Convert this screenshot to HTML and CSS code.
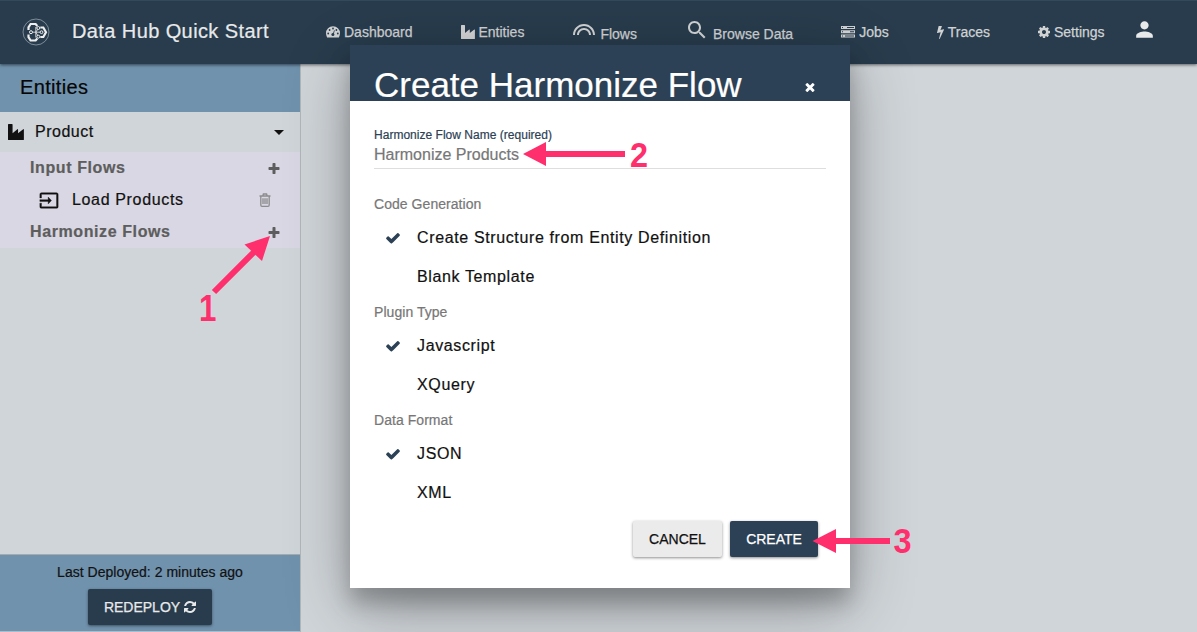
FILE: index.html
```html
<!DOCTYPE html>
<html lang="en">
<head>
<meta charset="utf-8">
<title>Data Hub Quick Start</title>
<link rel="stylesheet" href="styles.css">
</head>
<body>
<svg class="defs" width="0" height="0">
  <symbol id="check" viewBox="0 0 1792 1792"><path d="M1671 566q0 40-28 68l-724 724-136 136q-28 28-68 28t-68-28l-136-136-362-362q-28-28-28-68t28-68l136-136q28-28 68-28t68 28l294 295 656-657q28-28 68-28t68 28l136 136q28 28 28 68z"/></symbol>
  <symbol id="plus" viewBox="0 0 1792 1792"><path d="M1600 736v192q0 40-28 68t-68 28h-416v416q0 40-28 68t-68 28h-192q-40 0-68-28t-28-68v-416h-416q-40 0-68-28t-28-68v-192q0-40 28-68t68-28h416v-416q0-40 28-68t68-28h192q40 0 68 28t28 68v416h416q40 0 68 28t28 68z"/></symbol>
  <symbol id="industry" viewBox="0 0 14 14"><path d="M.4 0h3.200q.4 0 .4.4V8l4.200-3.400q.6-.4.6.3V8L13.300 4.600q.6-.4.6.3V13.500q0 .5-.5.5H.500Q0 14 0 13.500V.4Q0 0 .4 0z"/></symbol>
</svg>
<header class="toolbar">
  <svg class="logo" viewBox="0 0 28 28">
    <circle class="ring" cx="14" cy="14" r="13"/>
    <path class="thick" d="M6.500 12V9.300L8.600 6h5l1.700 2M6.500 16.500v2.700L8.600 22.500h5l1.700-2M18.300 9.500h3L24 14.200 21.300 19h-3"/>
    <path class="thin" d="M9 14.200h10M13.800 9v10.500M13.800 14.200l2.700-4M13.800 14.200l2.700 4.500"/>
    <circle class="node" cx="9" cy="14.200" r="1.500"/><circle class="node" cx="16.300" cy="10" r="1.500"/><circle class="node" cx="16.300" cy="18.700" r="1.500"/><circle class="node" cx="19.500" cy="14.200" r="1.400"/>
  </svg>
  <h1 class="brand">Data Hub Quick Start</h1>
  <nav class="nav">
    <a class="nav-item"><svg class="fa" viewBox="0 0 14 14"><path d="M7 1.300a7 7 0 0 1 7 7q0 2.200-1.100 4.200H1.100Q0 10.500 0 8.300a7 7 0 0 1 7-7z"/><g class="hole"><circle cx="2.200" cy="8.500" r=".9"/><circle cx="3.600" cy="5" r=".9"/><circle cx="7" cy="3.500" r=".9"/><circle cx="10.400" cy="5" r=".9"/><circle cx="11.800" cy="8.500" r=".9"/><circle cx="6.900" cy="9.600" r="1.500"/><path d="M8.100 5.200l.7.200L7.500 9.800l-.9-.2z"/></g></svg>Dashboard</a>
    <a class="nav-item"><svg class="fa"><use href="#industry"/></svg>Entities</a>
    <a class="nav-item tall"><svg class="md" viewBox="0 0 24 24"><path d="M12 10c-3.860 0-7 3.140-7 7h2c0-2.760 2.240-5 5-5s5 2.240 5 5h2c0-3.860-3.140-7-7-7zm0-4C5.930 6 1 10.930 1 17h2c0-4.960 4.040-9 9-9s9 4.040 9 9h2c0-6.070-4.930-11-11-11z"/></svg><span>Flows</span></a>
    <a class="nav-item tall"><svg class="md" viewBox="0 0 24 24"><path d="M15.500 14h-.79l-.28-.27C15.410 12.590 16 11.110 16 9.500 16 5.910 13.090 3 9.500 3S3 5.910 3 9.500 5.910 16 9.500 16c1.610 0 3.090-.59 4.230-1.570l.27.28v.79l5 4.990L20.490 19l-4.990-5zm-6 0C7.010 14 5 11.990 5 9.500S7.010 5 9.500 5 14 7.010 14 9.500 11.990 14 9.500 14z"/></svg><span>Browse Data</span></a>
    <a class="nav-item"><svg class="fa" viewBox="0 0 14 14"><path d="M0 1h14v3H0zM0 5.200h14v3H0zM0 9.400h14v3H0z"/><path class="hole" d="M6 2h7v1H6zM1 2h1v1H1zM9 6.200h4v1H9zM1 6.200h1v1H1zM4 10.400h9v1H4zM1 10.400h1v1H1z"/></svg>Jobs</a>
    <a class="nav-item"><svg class="fa bolt" viewBox="448 0 896 1792"><path d="M1333 566q18 20 7 44l-540 1157q-13 25-42 25-4 0-14-2-17-5-25.500-19t-4.500-30l197-808-406 101q-4 1-12 1-18 0-31-11-18-15-13-39l201-825q4-14 16-23t28-9h328q19 0 32 12.500t13 29.500q0 8-5 18l-171 463 396-98q8-2 12-2 19 0 34 15z"/></svg>Traces</a>
    <a class="nav-item"><svg class="fa cog" viewBox="128 128 1536 1536"><path d="M1152 896q0-106-75-181t-181-75-181 75-75 181 75 181 181 75 181-75 75-181zm512-109v222q0 12-8 23t-20 13l-185 28q-19 54-39 91 35 50 107 138 10 12 10 25t-9 23q-27 37-99 108t-94 71q-12 0-26-9l-138-108q-44 23-91 38-16 136-29 186-7 28-36 28h-222q-14 0-24.500-8.500t-11.500-21.500l-28-184q-49-16-90-37l-141 107q-10 9-25 9-14 0-25-11-126-114-165-168-7-10-7-23 0-12 8-23 15-21 51-66.500t54-70.500q-27-50-41-99l-183-27q-13-2-21-12.500t-8-23.500v-222q0-12 8-23t19-13l186-28q14-46 39-92-40-57-107-138-10-12-10-24 0-10 9-23 26-36 98.500-107.500t94.500-71.500q13 0 26 10l138 107q44-23 91-38 16-136 29-186 7-28 36-28h222q14 0 24.500 8.500t11.500 21.500l28 184q49 16 90 37l142-107q9-9 24-9 13 0 25 10 129 119 165 170 7 8 7 22 0 12-8 23-15 21-51 66.500t-54 70.500q26 50 41 98l183 28q13 2 21 12.500t8 23.500z"/></svg>Settings</a>
  </nav>
  <svg class="user" viewBox="0 0 24 24"><path d="M12 12c2.210 0 4-1.790 4-4s-1.790-4-4-4-4 1.790-4 4 1.790 4 4 4zm0 2c-2.670 0-8 1.340-8 4v2h16v-2c0-2.660-5.330-4-8-4z"/></svg>
</header>
<div class="page">
  <aside class="sidebar">
    <h2 class="side-title">Entities</h2>
    <div class="entity"><svg class="factory"><use href="#industry"/></svg><span class="entity-name">Product</span><svg class="caret" viewBox="0 0 10 5"><path d="M0 0h10L5 5z"/></svg></div>
    <div class="flows">
      <div class="flow-head"><span>Input Flows</span><svg class="plus"><use href="#plus"/></svg></div>
      <div class="flow-item"><svg class="input" viewBox="0 0 24 24" preserveAspectRatio="none"><path d="M21 3.010H3c-1.100 0-2 .9-2 2V9h2V4.990h18v14.030H3V15H1v4.010c0 1.100.9 1.980 2 1.980h18c1.100 0 2-.88 2-1.980v-14c0-1.110-.9-2-2-2zM11 16l4-4-4-4v3H1v2h10v3z"/></svg><span class="flow-name">Load Products</span><svg class="trash" viewBox="0 0 12 14"><path d="M.5 3h11M1.800 3v9q0 1.300 1.200 1.300h6q1.200 0 1.200-1.300V3M3.800 3l.6-2h3.200l.6 2M4 5.300v5.700M6 5.300v5.700M8 5.300v5.700"/></svg></div>
      <div class="flow-head last"><span>Harmonize Flows</span><svg class="plus"><use href="#plus"/></svg></div>
    </div>
    <footer class="deploy">
      <div class="deploy-text">Last Deployed: 2 minutes ago</div>
      <button class="btn redeploy">REDEPLOY <svg class="refresh" viewBox="128 128 1536 1536"><path d="M1639 1056q0 5-1 7-64 268-268 434.500t-478 166.500q-146 0-282.500-55t-243.500-157l-129 129q-19 19-45 19t-45-19-19-45v-448q0-26 19-45t45-19h448q26 0 45 19t19 45-19 45l-137 137q71 66 161 102t187 36q134 0 250-65t186-179q11-17 53-117 8-23 30-23h192q13 0 22.500 9.500t9.500 22.500zm25-800v448q0 26-19 45t-45 19h-448q-26 0-45-19t-19-45 19-45l138-138q-148-137-349-137-134 0-250 65t-186 179q-11 17-53 117-8 23-30 23h-199q-13 0-22.500-9.500t-9.500-22.500v-7q65-268 270-434.500t480-166.500q146 0 284 55.500t245 156.500l130-129q19-19 45-19t45 19 19 45z"/></svg></button>
    </footer>
  </aside>
  <main class="content"></main>
</div>
<section class="dialog">
  <div class="dialog-head"><h2 class="dialog-title">Create Harmonize Flow</h2><svg class="close" viewBox="302 238 1188 1316"><path d="M1490 1322q0 40-28 68l-136 136q-28 28-68 28t-68-28l-294-294-294 294q-28 28-68 28t-68-28l-136-136q-28-28-28-68t28-68l294-294-294-294q-28-28-28-68t28-68l136-136q28-28 68-28t68 28l294 294 294-294q28-28 68-28t68 28l136 136q28 28 28 68t-28 68l-294 294 294 294q28 28 28 68z"/></svg></div>
  <div class="dialog-body">
    <label class="field-label">Harmonize Flow Name (required)</label>
    <div class="field">Harmonize Products</div>
    <div class="group">Code Generation</div>
    <div class="option"><svg class="check"><use href="#check"/></svg><span>Create Structure from Entity Definition</span></div>
    <div class="option"><i class="check"></i><span>Blank Template</span></div>
    <div class="group">Plugin Type</div>
    <div class="option"><svg class="check"><use href="#check"/></svg><span>Javascript</span></div>
    <div class="option"><i class="check"></i><span>XQuery</span></div>
    <div class="group">Data Format</div>
    <div class="option"><svg class="check"><use href="#check"/></svg><span>JSON</span></div>
    <div class="option"><i class="check"></i><span>XML</span></div>
    <div class="actions"><button class="btn cancel">CANCEL</button><button class="btn create">CREATE</button></div>
  </div>
</section>
<svg class="notes" viewBox="0 0 1197 632">
  <path class="line" d="M214 292L256 250M546 154H625M836 541H890"/>
  <path d="M270 236l-25.500 8.500 17.500 16.500zM523 154l23-12v24zM812.500 541l23.500-12v24z"/>
  <text transform="translate(199 321) scale(.87 1)">1</text><text transform="translate(630 167) scale(.9 1)">2</text><text transform="translate(893.500 553) scale(.9 1)">3</text>
</svg>
</body>
</html>
```
FILE: styles.css
```css
* { box-sizing: border-box; }
body { margin: 0; width: 1197px; height: 632px; overflow: hidden; display: flex; flex-direction: column; position: relative; font-family: "Liberation Sans", Arial, sans-serif; font-size: 16px; color: #111; background: #d0d5d9; -webkit-text-stroke: .2px; }
h1, h2 { margin: 0; font-weight: 400; }
svg { display: block; flex: none; fill: currentColor; }
.defs { position: absolute; }

.toolbar { height: 64px; flex: none; display: flex; align-items: center; padding-left: 22px; background: #283c4d; border-top: 1px solid #34495a; color: #e8e9ea; box-shadow: 0 1px 3px rgba(0,0,0,.55); z-index: 1; }
.logo { width: 28px; height: 28px; margin-bottom: 1px; }
.logo .ring { fill: none; stroke: #93a0aa; stroke-width: .8; }
.logo .thick { fill: none; stroke: #eee; stroke-width: 2.2; }
.logo .thin { fill: none; stroke: #ddd; stroke-width: .9; }
.logo .node { fill: #283c4d; stroke: #eee; stroke-width: 1; }
.brand { width: 254px; margin-left: 22px; font-size: 20px; letter-spacing: .4px; line-height: 28px; padding-bottom: 3px; }
.nav { display: flex; gap: 48px; height: 63px; color: #d0d2d4; font-size: 14px; line-height: 16px; }
.nav-item { display: flex; align-items: center; gap: 4px; padding-bottom: 2px; white-space: nowrap; -webkit-text-stroke: .25px; }
.nav-item.tall { align-items: flex-start; padding-top: 17px; }
.tall span { padding-top: 8px; }
.fa { width: 14px; height: 14px; }
.bolt { width: 7px; }
.cog { width: 12px; height: 12px; }
.hole { fill: #283c4d; }
.md { width: 24px; height: 24px; }
.user { width: 25px; height: 25px; margin-left: 27px; margin-bottom: 7px; }

.page { flex: 1; display: flex; min-height: 0; }
.sidebar { width: 301px; display: flex; flex-direction: column; border-right: 1px solid #b2b6b9; }
.side-title { height: 48px; padding-left: 20px; font-size: 20px; line-height: 46px; letter-spacing: .35px; background: #7092ad; color: #050505; }
.entity { height: 40px; display: flex; align-items: center; padding: 0 16px 0 8px; color: #111; letter-spacing: .5px; }
.factory { width: 16px; height: 16px; }
.entity-name { flex: 1; margin-left: 11px; }
.caret { width: 10px; height: 5px; }
.flows { height: 96px; background: #d8d7e3; }
.flow-head { height: 32px; display: flex; align-items: center; justify-content: space-between; padding: 0 19px 0 30px; font-weight: 700; color: #5d5d5d; letter-spacing: .6px; }
.plus { width: 14px; height: 14px; margin-top: 2px; }
.flow-item { height: 32px; display: flex; align-items: center; padding: 0 29px 0 39px; letter-spacing: .65px; }
.input { width: 20px; height: 21px; stroke: currentColor; stroke-width: .4; }
.flow-name { flex: 1; margin-left: 13px; }
.trash { width: 12px; height: 14px; fill: none; stroke: #8c8c8c; stroke-width: 1.3; }
.content { flex: 1; }
.deploy { margin-top: auto; height: 78px; display: flex; flex-direction: column; align-items: center; border-top: 1px solid #a6abae; border-bottom: 1px solid #a8bccb; background: #7092ad; padding-top: 9px; }
.deploy-text { font-size: 14px; line-height: 16px; letter-spacing: .02px; }
.btn { height: 36px; border: 0; border-radius: 2px; font: 14px "Liberation Sans", Arial, sans-serif; display: flex; align-items: center; justify-content: center; box-shadow: 0 1px 3px rgba(0,0,0,.45); -webkit-text-stroke: .25px; padding: 0; }
.redeploy { width: 124px; margin-top: 9px; gap: 4px; background: #283c4d; color: #e8e9ea; }
.refresh { width: 12px; height: 12px; }

.dialog { position: absolute; left: 350px; top: 45px; width: 500px; height: 543px; z-index: 2; background: #fff; box-shadow: 0 19px 60px rgba(0,0,0,.3), 0 15px 20px rgba(0,0,0,.22); }
.dialog-head { height: 56px; display: flex; justify-content: space-between; align-items: flex-start; padding: 0 35px 0 24px; background: #2c4155; color: #fff; }
.dialog-title { font-size: 35px; line-height: 40px; padding-top: 20px; white-space: nowrap; }
.close { width: 10px; height: 10px; margin-top: 37px; }
.dialog-body { padding: 27px 24px 0; }
.field-label { display: block; font-size: 12px; line-height: 14px; color: #2c4155; letter-spacing: .02px; }
.field { height: 27px; line-height: 25px; border-bottom: 1px solid #dedede; color: #777; margin-bottom: 27px; }
.group { height: 16px; font-size: 14px; line-height: 16px; color: #777; margin-bottom: 6px; letter-spacing: .05px; }
.option { height: 39px; display: flex; align-items: center; padding-left: 11px; gap: 16px; letter-spacing: .63px; }
.option + .group { margin-top: 8px; }
.check { width: 16px; height: 16px; color: #2c4155; }
.actions { display: flex; justify-content: flex-end; gap: 8px; padding: 9px 8px 0 0; }
.cancel { width: 89px; background: #ebebeb; color: #111; }
.create { width: 88px; background: #2c4155; color: #fff; }

.notes { position: absolute; left: 0; top: 0; width: 1197px; height: 632px; z-index: 3; fill: #ff2e6c; font: 700 36px "Liberation Sans", Arial, sans-serif; }
.notes .line { fill: none; stroke: #ff2e6c; stroke-width: 6; }
```
